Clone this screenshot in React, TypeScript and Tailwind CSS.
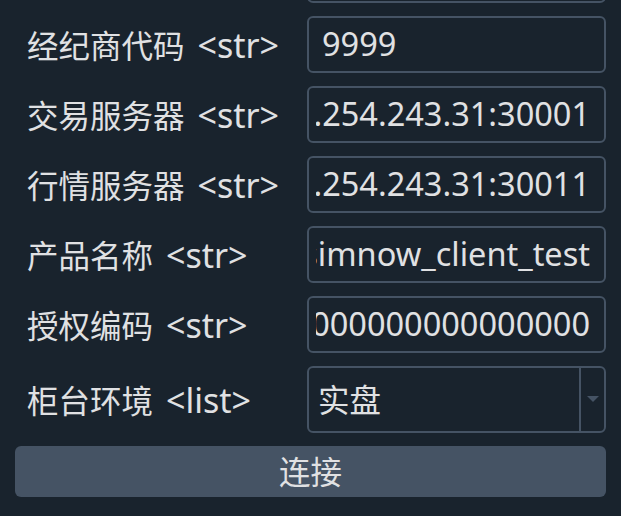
const font = { fontFamily: '"Noto Sans", "Noto Sans CJK SC", sans-serif' };

type Field = { name: string; tag: string; value: string; end?: boolean };

const fields: Field[] = [
  { name: '密码', tag: '<str>', value: '••••••' },
  { name: '经纪商代码', tag: '<str>', value: '9999' },
  { name: '交易服务器', tag: '<str>', value: 'tcp://182.254.243.31:30001', end: true },
  { name: '行情服务器', tag: '<str>', value: 'tcp://182.254.243.31:30011', end: true },
  { name: '产品名称', tag: '<str>', value: 'simnow_client_test', end: true },
  { name: '授权编码', tag: '<str>', value: '0000000000000000', end: true },
];

function Row({ name, tag, children }: { name: string; tag: string; children: React.ReactNode }) {
  return (
    <div className="grid grid-cols-[292px_299px] items-center">
      <div className="pl-[12px] flex items-baseline leading-none text-[#E0E1E3] whitespace-nowrap">
        <span className="text-[31.5px]">{name}</span>
        <span className="ml-[13px] text-[34px]">{tag}</span>
      </div>
      {children}
    </div>
  );
}

export default function App() {
  return (
    <div className="w-[621px] h-[516px] overflow-hidden bg-[#19232D] px-[15px]" style={font}>
      <div className="-mt-[54px] flex flex-col gap-[13px]">
        {fields.map((f) => (
          <Row key={f.name} name={f.name} tag={f.tag}>
            <div className="h-[57px] rounded-[6px] border-2 border-[#455364] pl-[7px] pr-[14px] overflow-hidden">
              <div
                className={
                  'h-full flex items-center overflow-hidden whitespace-nowrap text-[32.5px] text-[#E0E1E3] ' +
                  (f.end ? 'justify-end' : 'justify-start pl-[6px]')
                }
              >
                <span className="shrink-0">{f.value}</span>
              </div>
            </div>
          </Row>
        ))}
        <Row name="柜台环境" tag="<list>">
          <div className="h-[67px] rounded-[6px] border-2 border-[#455364] flex">
            <div className="flex-1 flex items-center pl-[9px] text-[31.5px] text-[#E0E1E3]">实盘</div>
            <div className="w-[25px] border-l-2 border-[#455364] flex items-center justify-center">
              <svg width="12" height="7" viewBox="0 0 12 7">
                <path d="M0 0 L12 0 L6 6 Z" fill="#455364" />
              </svg>
            </div>
          </div>
        </Row>
        <button className="h-[51px] w-full rounded-[6px] bg-[#455364] text-[31.5px] text-[#E0E1E3] flex items-center justify-center">
          连接
        </button>
      </div>
    </div>
  );
}
